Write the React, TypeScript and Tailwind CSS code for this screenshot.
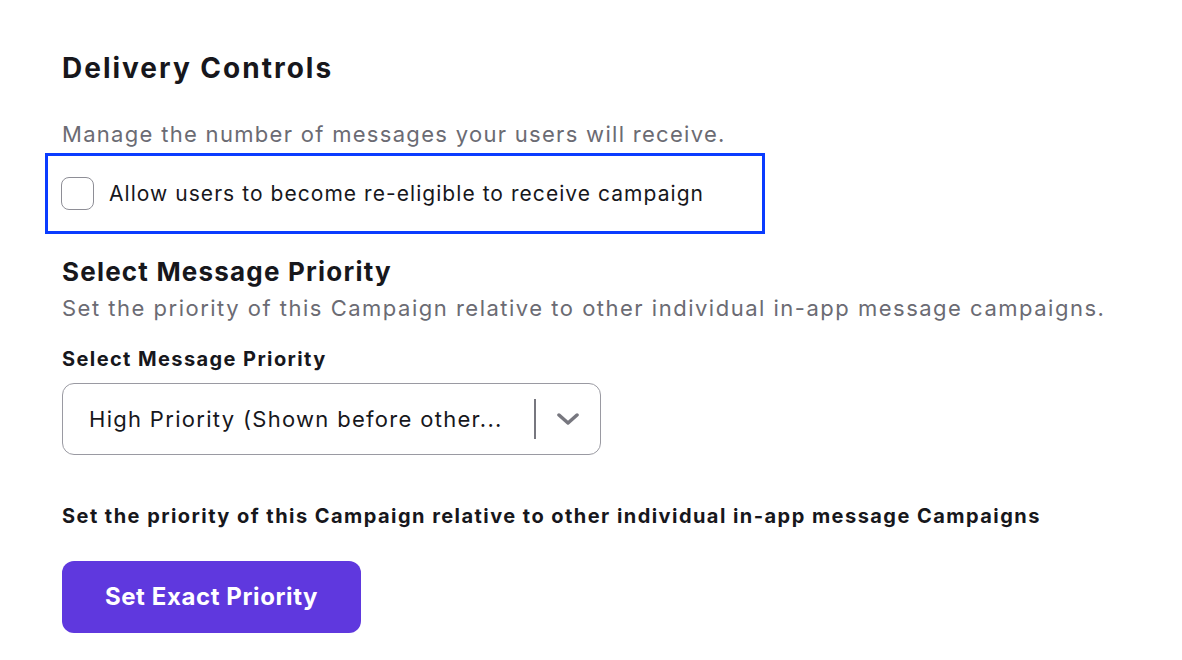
import { useState } from 'react';

export default function App() {
  const [checked, setChecked] = useState(false);

  return (
    <div className="min-h-[660px] w-[1182px] bg-white font-['Inter',sans-serif] text-[#17171c]">
      <div className="pl-[62px] pt-[50px]">
        {/* Delivery controls */}
        <h2 className="text-[28px] font-bold leading-[36px] tracking-[2px]">Delivery Controls</h2>
        <p className="mt-[34px] text-[22px] leading-[28px] tracking-[1.3px] text-[#6b6b73]">
          Manage the number of messages your users will receive.
        </p>

        <div className="-ml-[17px] mt-[5px] flex h-[81px] w-[720px] items-center border-[3px] border-[#0a3cff] pl-[13px]">
          <button
            onClick={() => setChecked(!checked)}
            className="h-[33px] w-[33px] shrink-0 rounded-[8px] border border-[#8e8e96] bg-white"
          />
          <span className="ml-[15px] text-[21px] leading-[28px] tracking-[1.05px] text-[#17171c]">
            Allow users to become re-eligible to receive campaign
          </span>
        </div>

        {/* Message priority */}
        <h3 className="mt-[21px] text-[26px] font-bold leading-[34px] tracking-[1.2px]">Select Message Priority</h3>
        <p className="mt-[5px] text-[22px] leading-[28px] tracking-[1.5px] text-[#6b6b73]">
          Set the priority of this Campaign relative to other individual in-app message campaigns.
        </p>

        <label className="mt-[24px] block text-[20px] font-bold leading-[26px] tracking-[1.4px]">
          Select Message Priority
        </label>
        <div className="mt-[11px] flex h-[72px] w-[539px] items-center rounded-[12px] border border-[#9a9aa2] pl-[26px] pr-[21px]">
          <span className="flex-1 truncate text-[22px] leading-[28px] tracking-[1.3px]">
            High Priority (Shown before other...
          </span>
          <div className="h-[40px] w-[2px] bg-[#77777f]" />
          <svg className="ml-[21px]" width="22" height="12" viewBox="0 0 22 12" fill="none">
            <path d="M2 2l9 8 9-8" stroke="#77777f" strokeWidth="3.5" strokeLinecap="round" strokeLinejoin="round" />
          </svg>
        </div>

        <p className="mt-[48px] text-[20px] font-bold leading-[26px] tracking-[1.45px]">
          Set the priority of this Campaign relative to other individual in-app message Campaigns
        </p>

        <button className="mt-[32px] flex h-[72px] w-[299px] items-center justify-center rounded-[12px] bg-[#5f38de] text-[24px] font-bold tracking-[0.6px] text-white">
          Set Exact Priority
        </button>
      </div>
    </div>
  );
}
